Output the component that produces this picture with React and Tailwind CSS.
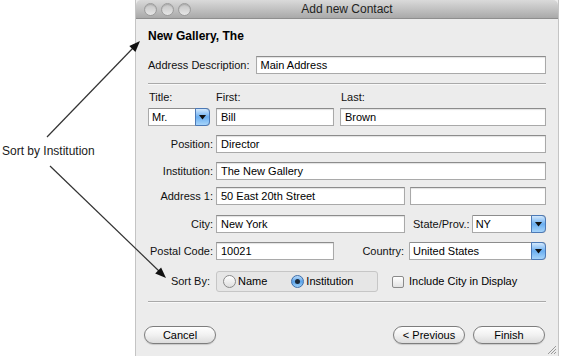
import React from "react";

const Field = ({ value, className = "" }) => (
  <div className={"h-[18px] bg-white border border-[#a9a9a9] border-t-[#8c8c8c] flex items-center pl-[4px] text-[11px] text-black whitespace-nowrap overflow-hidden shadow-[inset_0_1px_1px_rgba(0,0,0,0.12)] " + className}>
    {value}
  </div>
);

const Popup = ({ value, className = "" }) => (
  <div className={"h-[18px] bg-white border border-[#a9a9a9] border-t-[#8c8c8c] flex items-stretch rounded-r-[4px] text-[11px] text-black " + className}>
    <div className="flex-1 pl-[3px] flex items-center whitespace-nowrap overflow-hidden">{value}</div>
    <div className="w-[15px] -my-px -mr-px rounded-r-[4px] border border-[#4c79b6] bg-linear-to-b from-[#d2e8fc] via-[#6aaef0] to-[#a6d4fa] flex items-center justify-center">
      <svg width="7" height="5" viewBox="0 0 7 5">
        <polygon points="0,0 7,0 3.5,4.5" fill="#111" />
      </svg>
    </div>
  </div>
);

const Label = ({ children }) => (
  <div className="w-[65px] mr-[3px] text-right text-[11px] text-[#111] whitespace-nowrap">{children}</div>
);

const Button = ({ children }) => (
  <div className="w-[72px] h-[18px] rounded-full border border-[#7d7d7d] bg-linear-to-b from-white via-[#f1f1f1] to-[#dcdcdc] flex items-center justify-center text-[11px] text-black shadow-[0_1px_1px_rgba(0,0,0,0.15)]">
    {children}
  </div>
);

const Light = () => (
  <div className="w-[13px] h-[13px] rounded-full border border-[#9c9c9c] bg-linear-to-b from-[#c4c4c4] to-[#e6e6e6] shadow-[inset_0_1px_1px_rgba(0,0,0,0.15)]" />
);

export default function App() {
  return (
    <div className="relative w-[561px] h-[356px] bg-white overflow-hidden font-['Liberation_Sans',Arial,sans-serif]">
      <div className="flex h-full">
        <div className="w-[135px] shrink-0 flex flex-col">
          <div className="mt-[144px] ml-[2px] text-[12px] leading-[15px] text-[#1a1a1a] whitespace-nowrap">Sort by Institution</div>
        </div>
        <div className="w-[424px] h-full flex flex-col bg-[#ececec] border-x border-[#c4c4c4]">
          {/* title bar */}
          <div className="h-[19px] shrink-0 rounded-t-[5px] border-b border-[#8e8e8e] bg-linear-to-b from-[#dadada] via-[#c2c2c2] to-[#a9a9a9] flex items-center relative">
            <div className="flex items-center gap-[4px] ml-[8px]">
              <Light />
              <Light />
              <Light />
            </div>
            <div className="absolute inset-0 flex items-center justify-center text-[12px] text-[#222] pointer-events-none">Add new Contact</div>
          </div>

          <div className="flex flex-col pl-[12px] pr-[12px]">
            <div className="mt-[10px] text-[12px] leading-[14px] font-bold text-black">New Gallery, The</div>

            <div className="mt-[13px] flex items-center">
              <div className="text-[11px] text-[#111] mr-[6px] whitespace-nowrap">Address Description:</div>
              <Field value="Main Address" className="flex-1" />
            </div>

            <div className="mt-[9px] h-[2px] border-t border-[#a9a9a9] border-b border-b-[#f8f8f8]" />

            <div className="mt-[6px] flex text-[11px] leading-[13px] text-[#111]">
              <div className="w-[68px] pl-[1px]">Title:</div>
              <div className="w-[124px]">First:</div>
              <div className="pl-[1px]">Last:</div>
            </div>

            <div className="mt-[4px] flex items-center">
              <Popup value="Mr." className="w-[62px]" />
              <Field value="Bill" className="ml-[6px] w-[118px]" />
              <Field value="Brown" className="ml-[6px] flex-1" />
            </div>

            <div className="mt-[9px] flex items-center">
              <Label>Position:</Label>
              <Field value="Director" className="flex-1" />
            </div>

            <div className="mt-[9px] flex items-center">
              <Label>Institution:</Label>
              <Field value="The New Gallery" className="flex-1" />
            </div>

            <div className="mt-[7px] flex items-center">
              <Label>Address 1:</Label>
              <Field value="50 East 20th Street" className="w-[189px]" />
              <Field value="" className="ml-[5px] flex-1" />
            </div>

            <div className="mt-[10px] flex items-center">
              <Label>City:</Label>
              <Field value="New York" className="w-[189px]" />
              <div className="ml-[8px] text-[11px] text-[#111] whitespace-nowrap">State/Prov.:</div>
              <Popup value="NY" className="ml-[2px] flex-1" />
            </div>

            <div className="mt-[9px] flex items-center">
              <Label>Postal Code:</Label>
              <Field value="10021" className="w-[118px]" />
              <div className="flex-1 text-right text-[11px] text-[#111] whitespace-nowrap">Country:</div>
              <Popup value="United States" className="ml-[5px] w-[137px]" />
            </div>

            <div className="mt-[11px] flex items-center">
              <div className="w-[62px] mr-[6px] text-right text-[11px] text-[#111]">Sort By:</div>
              <div className="w-[162px] h-[21px] rounded-[3px] border border-[#c6c6c6] bg-[#e6e6e6] flex items-center text-[11px] text-black">
                <div className="ml-[6px] w-[13px] h-[13px] rounded-full border border-[#8a8a8a] bg-linear-to-b from-white to-[#dedede]" />
                <div className="ml-[2px]">Name</div>
                <div className="ml-[24px] w-[13px] h-[13px] rounded-full border border-[#3f6ea9] bg-linear-to-b from-[#b9dbfa] via-[#5aa2e9] to-[#9dd0f8] flex items-center justify-center">
                  <div className="w-[5px] h-[5px] rounded-full bg-[#1b2a3a]" />
                </div>
                <div className="ml-[2px]">Institution</div>
              </div>
              <div className="ml-[14px] w-[12px] h-[12px] rounded-[2px] border border-[#8a8a8a] bg-linear-to-b from-white to-[#e2e2e2]" />
              <div className="ml-[5px] text-[11px] text-black whitespace-nowrap">Include City in Display</div>
            </div>

            <div className="mt-[9px] h-[2px] border-t border-[#a9a9a9] border-b border-b-[#f8f8f8]" />

            <div className="mt-[23px] -ml-[4px] mr-[1px] flex items-center">
              <Button>Cancel</Button>
              <div className="flex-1" />
              <Button>&lt; Previous</Button>
              <div className="ml-[8px]">
                <Button>Finish</Button>
              </div>
            </div>
          </div>

          <div className="flex-1 flex justify-end items-end">
            <svg width="11" height="11" viewBox="0 0 11 11" className="mb-[1px] mr-[1px]">
              <line x1="10" y1="2" x2="2" y2="10" stroke="#9a9a9a" strokeWidth="1" />
              <line x1="10" y1="5" x2="5" y2="10" stroke="#9a9a9a" strokeWidth="1" />
              <line x1="10" y1="8" x2="8" y2="10" stroke="#9a9a9a" strokeWidth="1" />
            </svg>
          </div>
        </div>
      </div>

      <svg className="absolute inset-0 pointer-events-none" width="561" height="356" viewBox="0 0 561 356">
        <line x1="47" y1="137" x2="134" y2="47" stroke="#333" strokeWidth="1.2" />
        <polygon points="140,41 135.4,51.9 129.3,45.9" fill="#111" />
        <line x1="50" y1="166" x2="160" y2="272" stroke="#333" strokeWidth="1.2" />
        <polygon points="166,278 155.2,273.4 161.1,267.4" fill="#111" />
      </svg>
    </div>
  );
}
